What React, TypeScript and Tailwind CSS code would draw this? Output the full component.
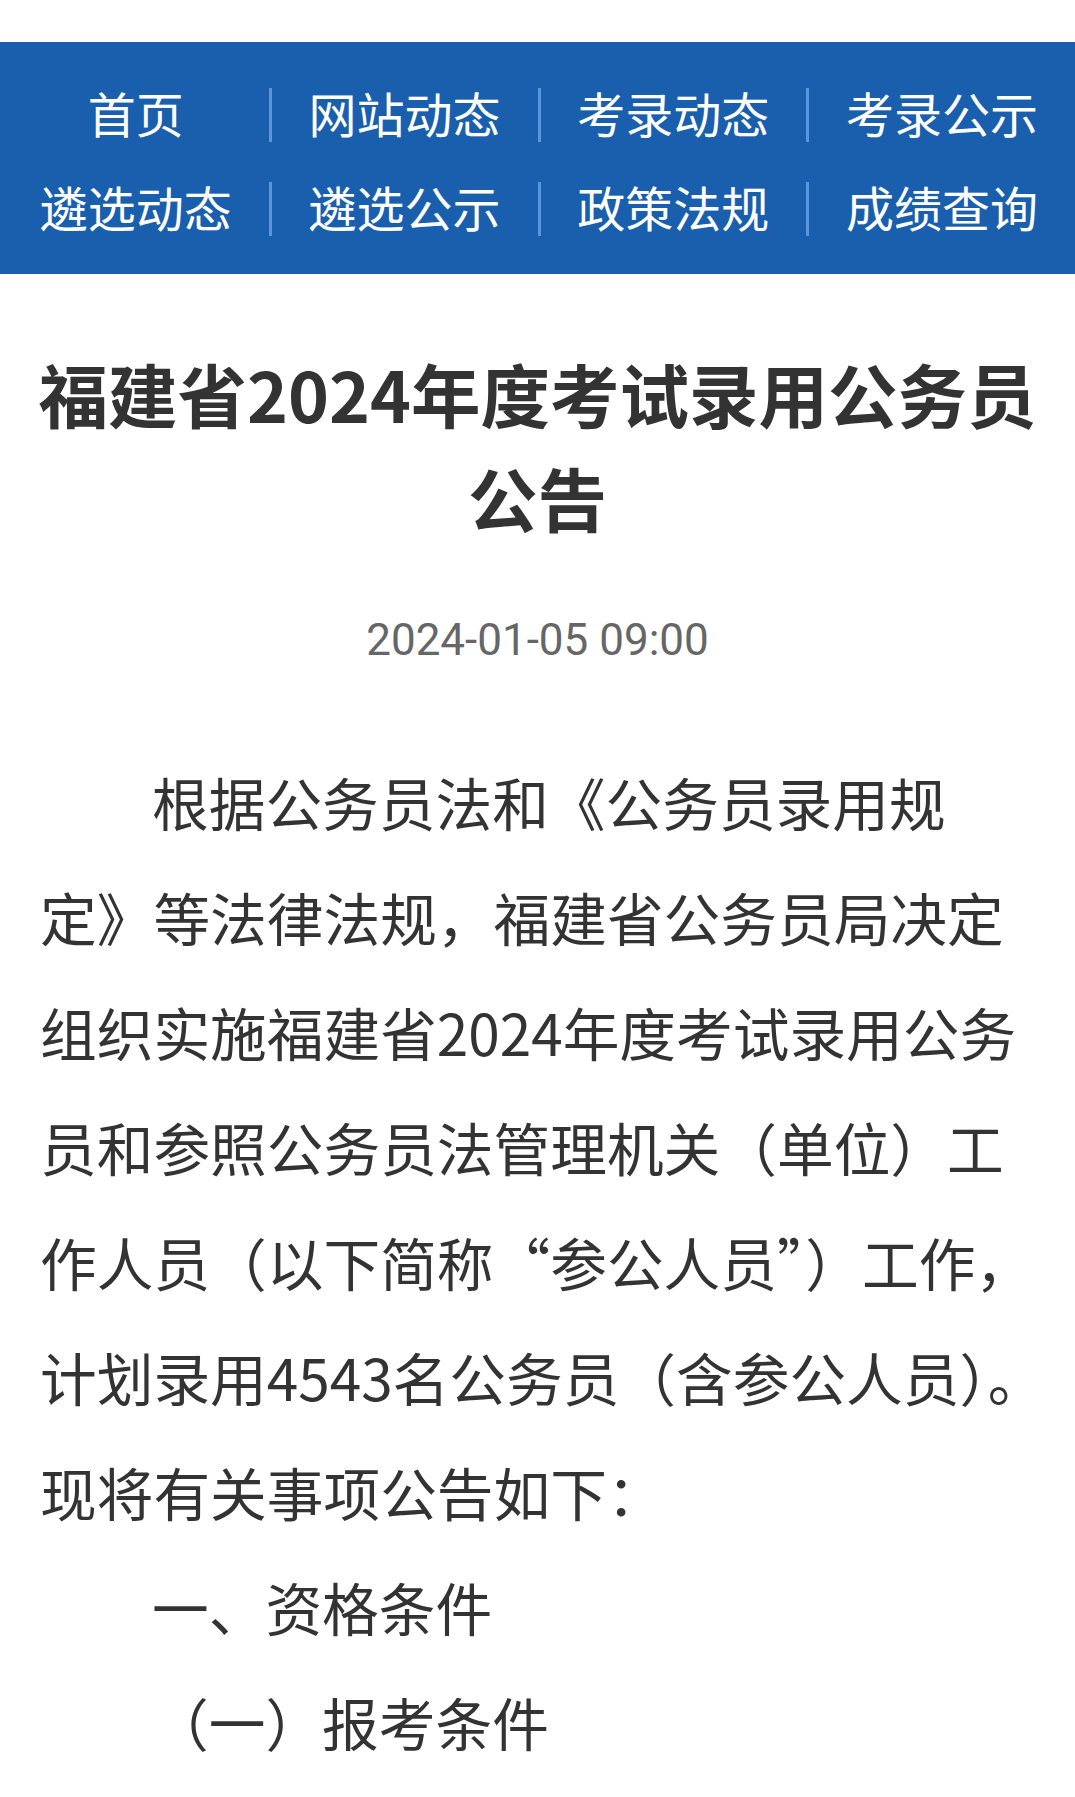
const navItems = [
  "首页",
  "网站动态",
  "考录动态",
  "考录公示",
  "遴选动态",
  "遴选公示",
  "政策法规",
  "成绩查询",
];

// line breaks follow the original page's wrapping
const intro = [
  "根据公务员法和《公务员录用规",
  "定》等法律法规，福建省公务员局决定",
  "组织实施福建省2024年度考试录用公务",
  "员和参照公务员法管理机关（单位）工",
  "作人员（以下简称“参公人员”）工作，",
  "计划录用4543名公务员（含参公人员）。",
  "现将有关事项公告如下：",
];

const headings = ["一、资格条件", "（一）报考条件"];

export default function App() {
  return (
    <div className="min-h-screen bg-white font-['Noto_Sans_CJK_SC',sans-serif] text-[#333]">
      <div className="h-[42px] bg-white" />
      <nav className="grid grid-cols-4 bg-[#1a5fae] pt-[26px] pb-[18px]">
        {navItems.map((item, i) => (
          <div key={item} className="flex h-[94px] items-center">
            {i % 4 !== 0 ? (
              <span className="h-[54px] w-[3px] shrink-0 bg-[#5b96dc]" />
            ) : (
              <span className="w-[3px] shrink-0" />
            )}
            <span className="flex-1 pb-[7px] text-center text-[48px] leading-none text-white">
              {item}
            </span>
          </div>
        ))}
      </nav>

      <header className="px-[30px] pt-[67px]">
        <h1 className="whitespace-nowrap text-center text-[69.5px] font-bold leading-[104px] text-[#333]">
          福建省2024年度考试录用公务员
          <br />
          公告
        </h1>
        <p className="mt-[61px] text-center font-['Roboto',sans-serif] text-[44px] leading-[60px] text-[#666]">
          2024-01-05 09:00
        </p>
      </header>

      <main className="px-[40px] pt-[74px] pb-[10px] text-[56.7px] leading-[115px] text-[#333]">
        <p className="whitespace-nowrap indent-[112px]">
          {intro.map((line, i) => (
            <span key={line}>
              {line}
              {i < intro.length - 1 && <br />}
            </span>
          ))}
        </p>
        {headings.map((text) => (
          <p key={text} className="indent-[112px]">
            {text}
          </p>
        ))}
      </main>
    </div>
  );
}
